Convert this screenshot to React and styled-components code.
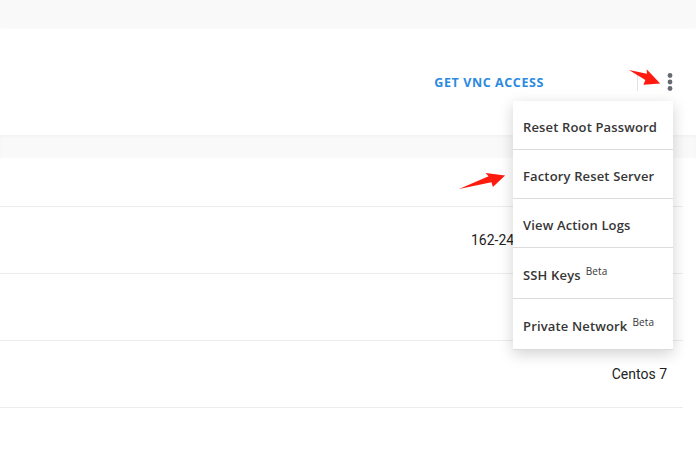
import styled, { createGlobalStyle } from "styled-components";

const GlobalStyle = createGlobalStyle`
  html, body {
    margin: 0;
    padding: 0;
    background: #fff;
  }
  body {
    font-family: Roboto, "Liberation Sans", sans-serif;
    color: #222;
  }
`;

const Page = styled.div`
  position: relative;
  width: 696px;
  height: 456px;
  overflow: hidden;
  background: #fff;
`;

const TopBar = styled.div`
  height: 27px;
  background: #f9f9f9;
  box-shadow: 0 1px 2px rgba(0, 0, 0, 0.04);
`;

const Header = styled.div`
  height: 108px;
  display: flex;
  justify-content: flex-end;
  align-items: center;
  padding: 2px 23px 0 0;
  box-sizing: border-box;
`;

const VncLink = styled.a`
  font-family: "Open Sans", sans-serif;
  font-weight: 700;
  font-size: 12.5px;
  letter-spacing: 0.6px;
  color: #2b8ae0;
  text-transform: uppercase;
  margin-right: 93px;
  cursor: pointer;
`;

const Divider = styled.span`
  width: 1px;
  height: 18px;
  background: #dde2ea;
  margin-right: 29px;
`;

const KebabWrap = styled.div`
  position: relative;
  display: flex;
`;

const Menu = styled.ul`
  position: absolute;
  top: calc(100% + 10px);
  right: 0;
  width: 160px;
  margin: 0;
  padding: 0;
  list-style: none;
  background: #fff;
  box-shadow: 0 4px 14px rgba(0, 0, 0, 0.18);
  z-index: 2;
`;

const MenuItem = styled.li`
  height: ${({ $tall }) => ($tall ? "51px" : "49px")};
  display: flex;
  align-items: center;
  padding: ${({ $tall }) => ($tall ? "4px 0 0 10px" : "3px 0 0 10px")};
  box-sizing: border-box;
  border-bottom: 1px solid #dcdcdc;
  font-family: "Open Sans", sans-serif;
  font-weight: 600;
  font-size: 13px;
  letter-spacing: 0.15px;
  color: #363636;
  white-space: nowrap;
  cursor: pointer;
`;

const Beta = styled.sup`
  font-family: "Open Sans", sans-serif;
  font-weight: 400;
  font-size: 10px;
  margin-left: 5px;
  position: relative;
  top: -4px;
`;

const SubBand = styled.div`
  height: 23px;
  background: #f9f9f9;
  box-shadow: inset 0 2px 3px rgba(0, 0, 0, 0.025);
`;

const Table = styled.div`
  margin-right: 13px;
`;

const Row = styled.div`
  height: ${({ $h }) => $h}px;
  display: flex;
  align-items: center;
  justify-content: flex-end;
  padding-right: 16px;
  border-bottom: 1px solid #ececec;
  box-sizing: border-box;
  font-size: 14px;
  color: #222;
`;

const Cell = styled.span`
  width: ${({ $w }) => ($w ? `${$w}px` : "auto")};
  white-space: nowrap;
  overflow: hidden;
`;

const Kebab = () => (
  <svg width="6" height="18" viewBox="0 0 6 18">
    <circle cx="3" cy="2.5" r="2.4" fill="#676b71" />
    <circle cx="3" cy="9" r="2.4" fill="#676b71" />
    <circle cx="3" cy="15.5" r="2.4" fill="#676b71" />
  </svg>
);

const ArrowBox = styled.svg`
  position: absolute;
  left: ${({ $x }) => $x}px;
  top: ${({ $y }) => $y - 8}px;
  transform-origin: 0 8px;
  transform: rotate(${({ $angle }) => $angle}deg);
  overflow: visible;
  z-index: 3;
`;

// red pointer: thin tail widening into a barbed head
const Arrow = ({ x, y, length, angle }) => {
  const L = length;
  const pts = [
    [0, 8],
    [L - 16, 4.5],
    [L - 18, 0.5],
    [L, 8.5],
    [L - 15, 16],
    [L - 15, 11],
  ]
    .map((p) => p.join(","))
    .join(" ");
  return (
    <ArrowBox $x={x} $y={y} $angle={angle} width={L} height="16">
      <polygon points={pts} fill="#ff1a0f" />
    </ArrowBox>
  );
};

const menuItems = [
  { label: "Reset Root Password" },
  { label: "Factory Reset Server" },
  { label: "View Action Logs" },
  { label: "SSH Keys", beta: true },
  { label: "Private Network", beta: true },
];

const rows = [
  { h: 49, text: "" },
  { h: 67, text: "162-245-221-108.hostname", w: 196 },
  { h: 67, text: "" },
  { h: 67, text: "Centos 7" },
];

export default function App() {
  return (
    <Page>
      <GlobalStyle />
      <TopBar />
      <Header>
        <VncLink>Get VNC Access</VncLink>
        <Divider />
        <KebabWrap>
          <Kebab />
          <Menu>
            {menuItems.map(({ label, beta }) => (
              <MenuItem key={label} $tall={beta}>
                {label}
                {beta && <Beta>Beta</Beta>}
              </MenuItem>
            ))}
          </Menu>
        </KebabWrap>
      </Header>
      <SubBand />
      <Table>
        {rows.map(({ h, text, w }, i) => (
          <Row key={i} $h={h}>
            <Cell $w={w}>{text}</Cell>
          </Row>
        ))}
      </Table>
      <Arrow x={629} y={70} length={34} angle={22.7} />
      <Arrow x={459} y={189} length={48} angle={-16.9} />
    </Page>
  );
}
